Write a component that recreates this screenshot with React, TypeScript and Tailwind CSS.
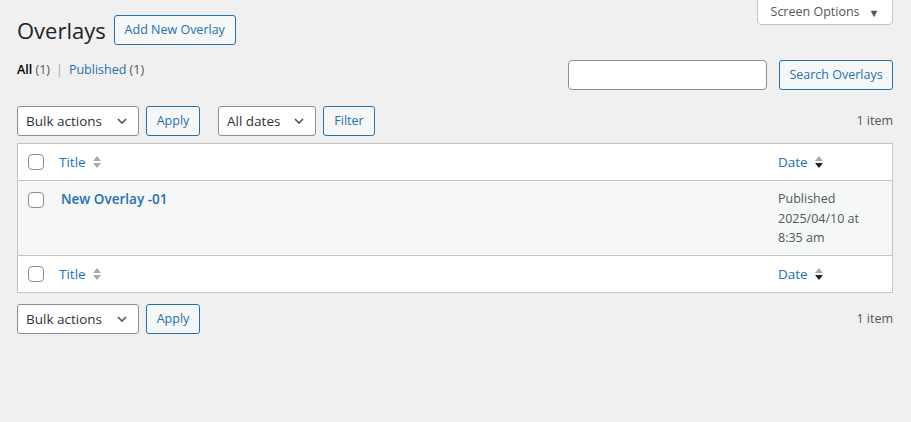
import React from 'react';

const font = { fontFamily: '"Open Sans", "Noto Sans", sans-serif' };

const SortIcon: React.FC<{ desc?: boolean }> = ({ desc }) => (
  <svg width="10" height="16" viewBox="0 0 10 16" className="shrink-0">
    <polygon points="1,7 5,2 9,7" fill="#a7aaad" />
    <polygon points="1,9 5,14 9,9" fill={desc ? '#1d2327' : '#a7aaad'} />
  </svg>
);

const Check: React.FC = () => (
  <span className="block w-4 h-4 rounded-[4px] border border-[#8c8f94] bg-white" />
);

const Chevron: React.FC = () => (
  <svg width="12" height="12" viewBox="0 0 12 12" fill="none" className="shrink-0">
    <path d="M2 4l4 4 4-4" stroke="#50575e" strokeWidth="1.6" />
  </svg>
);

const Select: React.FC<{ label: string; w: string }> = ({ label, w }) => (
  <div
    className={`${w} h-[30px] flex items-center justify-between pl-2 pr-[10px] bg-white border border-[#8c8f94] rounded-[3px] text-[13.5px] text-[#2c3338] whitespace-nowrap`}
  >
    <span>{label}</span>
    <Chevron />
  </div>
);

const Button: React.FC<{ children: React.ReactNode; className?: string }> = ({ children, className }) => (
  <button
    className={`h-[30px] flex items-center justify-center border border-[#2271b1] rounded-[3px] bg-[#f6f7f7] text-[12.5px] text-[#2271b1] whitespace-nowrap ${className ?? ''}`}
  >
    {children}
  </button>
);

const HeadRow: React.FC<{ top?: boolean }> = ({ top }) => (
  <div className={`flex items-center h-[37px] ${top ? 'border-b' : 'border-t'} border-[#c3c4c7]`}>
    <div className="w-[31px] pl-[10px]">
      <Check />
    </div>
    <div className="flex-1 pl-[10px] flex items-center gap-[6px] text-[13.5px] text-[#2271b1]">
      Title <SortIcon />
    </div>
    <div className="w-[124px] pl-[10px] flex items-center gap-[6px] text-[13.5px] text-[#2271b1]">
      Date <SortIcon desc />
    </div>
  </div>
);

const Tablenav: React.FC<{ top?: boolean }> = ({ top }) => (
  <div className="flex items-center h-[30px]">
    <Select label="Bulk actions" w="w-[122px]" />
    <Button className="ml-[7px] w-[54px]">Apply</Button>
    {top && (
      <>
        <Select label="All dates" w="w-[98px] ml-[18px]" />
        <Button className="ml-[7px] w-[52px]">Filter</Button>
      </>
    )}
    <span className="ml-auto text-[12.5px] text-[#50575e]">1 item</span>
  </div>
);

export default function App() {
  return (
    <div className="min-h-screen w-full bg-[#f0f0f1] text-[13px] text-[#3c434a]" style={font}>
      <div className="pl-[17px] pr-[18px]">
        <div className="flex items-start justify-between">
          <div className="flex items-center pt-[15px]">
            <h1 className="text-[22px] leading-[30px] text-[#1d2327] mr-[8px]">Overlays</h1>
            <Button className="w-[122px]">Add New Overlay</Button>
          </div>
          <button className="h-[26px] -mt-px w-[136px] flex items-center justify-center gap-[9px] bg-white border border-[#c3c4c7] rounded-b-[4px] text-[12.5px] text-[#50575e] whitespace-nowrap">
            Screen Options <span className="text-[11px] leading-none text-[#50575e]">▼</span>
          </button>
        </div>

        <div className="flex items-start justify-between mt-[15px]">
          <div className="pt-[1px] leading-[18px] text-[12.5px] whitespace-nowrap">
            <span className="font-semibold text-[#000]">All</span>{' '}
            <span className="text-[#50575e]">(1)</span>
            <span className="text-[#a7aaad] mx-[6px]">|</span>
            <span className="text-[#2271b1]">Published</span>{' '}
            <span className="text-[#50575e]">(1)</span>
          </div>
          <div className="flex items-center gap-[12px]">
            <div className="w-[199px] h-[30px] bg-white border border-[#8c8f94] rounded-[4px]" />
            <Button className="w-[114px]">Search Overlays</Button>
          </div>
        </div>

        <div className="mt-[16px]">
          <Tablenav top />
        </div>

        <div className="mt-[7px] bg-white border border-[#c3c4c7]">
          <HeadRow top />
          <div className="flex items-start h-[74px] bg-[#f6f7f7]">
            <div className="w-[31px] pl-[10px] pt-[11px]">
              <Check />
            </div>
            <div className="flex-1 pl-[12px] pt-[8px] text-[13.5px] leading-[21px] font-semibold text-[#2271b1]">
              New Overlay -01
            </div>
            <div className="w-[124px] pl-[10px] pt-[8px] text-[12.5px] leading-[19.5px] text-[#50575e]">
              Published
              <br />
              2025/04/10 at
              <br />
              8:35 am
            </div>
          </div>
          <HeadRow />
        </div>

        <div className="mt-[11px]">
          <Tablenav />
        </div>
      </div>
    </div>
  );
}
